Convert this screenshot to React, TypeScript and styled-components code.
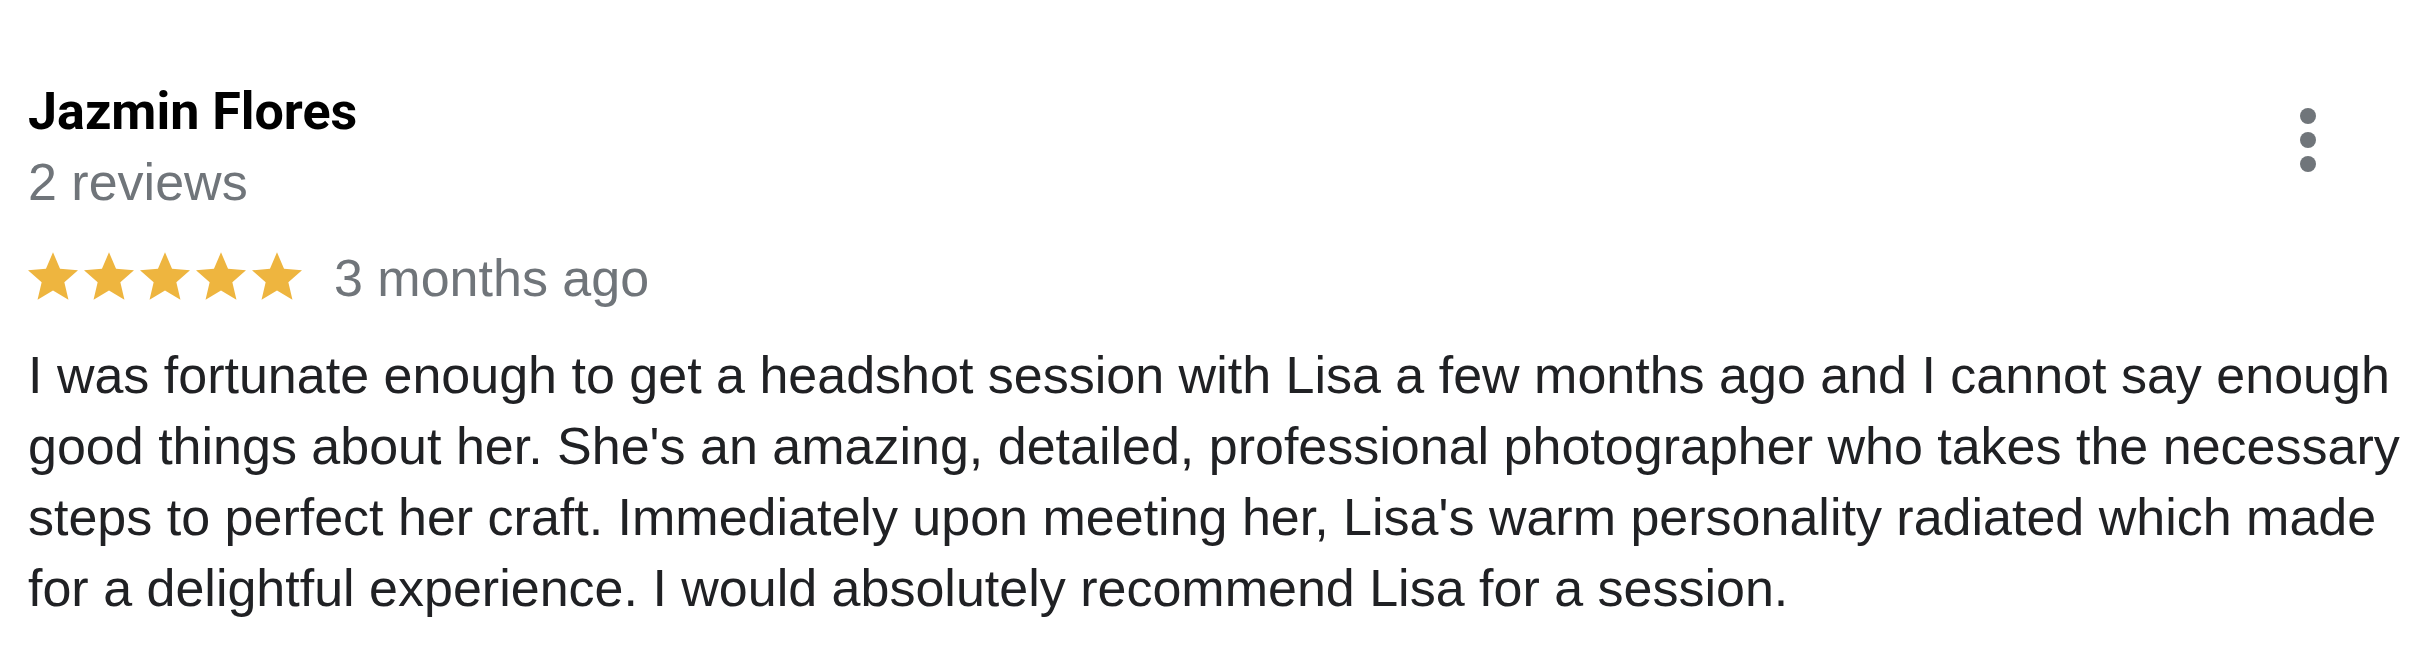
import React from "react";
import styled, { createGlobalStyle } from "styled-components";

const Global = createGlobalStyle`
  html, body { margin: 0; padding: 0; background: #ffffff; }
  body { font-family: "Liberation Sans", Arial, sans-serif; }
`;

const Card = styled.article`
  width: 2424px;
  box-sizing: border-box;
  padding: 80px 12px 40px 28px;
  display: flex;
  flex-direction: column;
`;

const Header = styled.header`
  display: flex;
  justify-content: space-between;
  align-items: flex-start;
  padding-right: 56px;
`;

const Author = styled.div`
  display: flex;
  flex-direction: column;
`;

const Name = styled.div`
  font-family: Roboto, "Liberation Sans", sans-serif;
  font-weight: 700;
  font-size: 52px;
  line-height: 64px;
  color: #000000;
`;

const Meta = styled.div`
  margin-top: 6px;
  font-size: 52px;
  line-height: 64px;
  color: #70757a;
`;

const MoreButton = styled.button`
  margin-top: 12px;
  width: 96px;
  height: 96px;
  padding: 0;
  border: none;
  background: transparent;
  display: flex;
  align-items: center;
  justify-content: center;
  cursor: pointer;
`;

const RatingRow = styled.div`
  margin-top: 32px;
  display: flex;
  align-items: flex-start;
  gap: 32px;
`;

const Stars = styled.div`
  display: flex;
  gap: 6px;
  margin-top: 6px;
`;

const Time = styled.span`
  font-size: 52px;
  line-height: 64px;
  color: #70757a;
`;

const Body = styled.p`
  margin: 30px 0 0;
  font-size: 52px;
  line-height: 71px;
  color: #202124;
`;

const Star = () => (
  <svg width="50" height="48" viewBox="2 2 20 19" aria-hidden="true">
    <path
      fill="#eeb53f"
      d="M12 17.27L18.18 21l-1.64-7.03L22 9.24l-7.19-.61L12 2 9.19 8.63 2 9.24l5.46 4.73L5.82 21z"
    />
  </svg>
);

const MoreVert = () => (
  <svg width="96" height="96" viewBox="0 0 24 24" aria-hidden="true">
    <circle cx="12" cy="6" r="2" fill="#70757a" />
    <circle cx="12" cy="12" r="2" fill="#70757a" />
    <circle cx="12" cy="18" r="2" fill="#70757a" />
  </svg>
);

export default function App() {
  return (
    <>
      <Global />
      <Card>
        <Header>
          <Author>
            <Name>Jazmin Flores</Name>
            <Meta>2 reviews</Meta>
          </Author>
          <MoreButton aria-label="More options">
            <MoreVert />
          </MoreButton>
        </Header>
        <RatingRow>
          <Stars>
            {[0, 1, 2, 3, 4].map((i) => (
              <Star key={i} />
            ))}
          </Stars>
          <Time>3 months ago</Time>
        </RatingRow>
        <Body>
          I was fortunate enough to get a headshot session with Lisa a few months ago and I cannot say enough
          good things about her. She's an amazing, detailed, professional photographer who takes the necessary
          steps to perfect her craft. Immediately upon meeting her, Lisa's warm personality radiated which made
          for a delightful experience. I would absolutely recommend Lisa for a session.
        </Body>
      </Card>
    </>
  );
}
